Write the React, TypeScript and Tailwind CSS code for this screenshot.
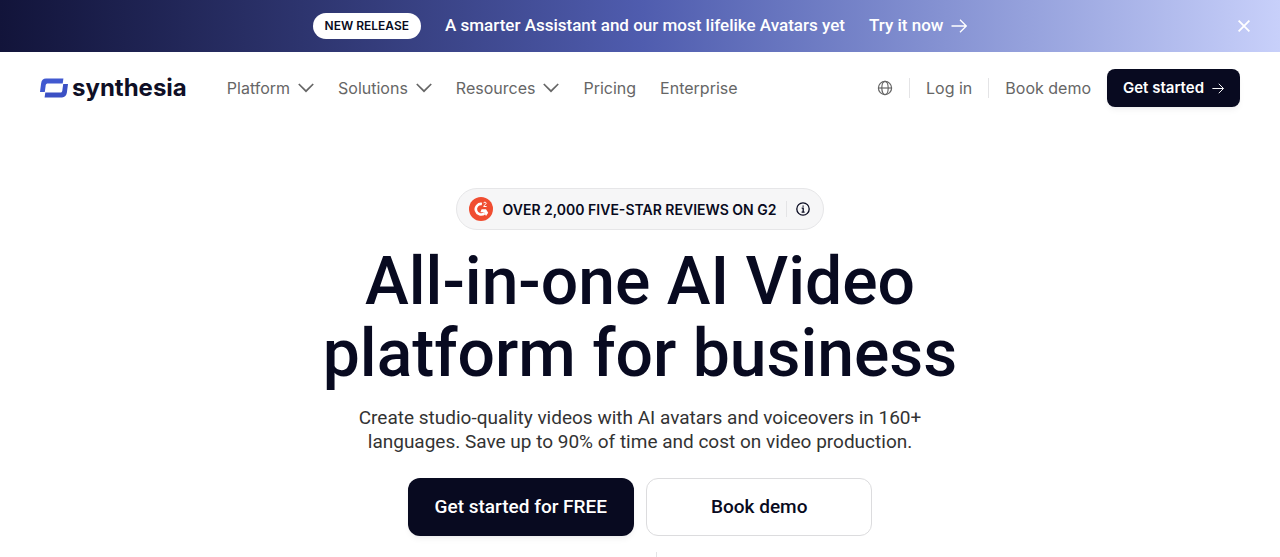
const navItems = [
  { label: 'Platform', menu: true },
  { label: 'Solutions', menu: true },
  { label: 'Resources', menu: true },
  { label: 'Pricing', menu: false },
  { label: 'Enterprise', menu: false },
];

function Arrow({ className }: { className?: string }) {
  return (
    <svg viewBox="0 0 16 14" fill="none" stroke="currentColor" strokeWidth="1.3" className={className} aria-hidden="true">
      <path d="M0.5 7h14.7M9 0.7 15.3 7 9 13.3" />
    </svg>
  );
}

function Chevron() {
  return (
    <svg viewBox="0 0 16 10" fill="none" stroke="currentColor" strokeWidth="1.7" className="h-[10px] w-4" aria-hidden="true">
      <path d="M0.8 1 8 8.2 15.2 1" />
    </svg>
  );
}

function Logo() {
  return (
    <a href="#" aria-label="synthesia" className="flex items-center gap-1 text-[#0f0f26]">
      <svg viewBox="0 0 28 20" className="h-5 w-7" aria-hidden="true">
        <path fill="#4159d0" d="M6 0.5H23.4L22.7 5.5H8C6.6 5.5 5.9 6 5.7 7.3L4.8 14H0L1.1 5.4C1.5 2.3 3.2 0.5 6 0.5Z" />
        <path fill="#3b50c4" d="M22 19.5H4.6L5.3 14.5H20C21.4 14.5 22.1 14 22.3 12.7L23.2 6H28L26.9 14.6C26.5 17.7 24.8 19.5 22 19.5Z" />
      </svg>
      <span className="text-[24px] leading-8 font-bold">synthesia</span>
    </a>
  );
}

function G2Badge() {
  return (
    <svg viewBox="0 0 24 24" className="size-6" aria-hidden="true">
      <circle cx="12" cy="12" r="12" fill="#f04d31" />
      <path d="M12.9 7A5.3 5.3 0 1 0 15.6 16.2" fill="none" stroke="#fff" strokeWidth="2.6" />
      <path d="M12.6 12.2h4.4l2.2 3.5-2.2 3.400-2-3.800h-3.600z" fill="#fff" />
      <path d="M14.5 6.2c.2-1.3 2.7-1.4 2.7.1 0 1.2-2.3 1.5-2.5 3.2h2.9" fill="none" stroke="#fff" />
    </svg>
  );
}

export default function App() {
  return (
    <div className="h-screen overflow-hidden bg-white font-['Inter',sans-serif] text-[#080a20]">
      <div className="flex h-[52px] items-center bg-linear-to-r from-[#12143a] via-[#4f5cae] to-[#c8d0fa] px-7 text-white">
        <div className="flex flex-1 items-center justify-center gap-6 pl-4 font-['Roboto',sans-serif] text-[17px] font-medium">
          <span className="rounded-full bg-white px-3 py-1 font-['Inter',sans-serif] text-[12px] leading-[18px] font-semibold text-[#080a20]">
            NEW RELEASE
          </span>
          <span>A smarter Assistant and our most lifelike Avatars yet</span>
          <a href="#" className="flex items-center gap-2">
            Try it now
            <Arrow className="h-[14px] w-4" />
          </a>
        </div>
        <button type="button" aria-label="Close" className="p-0.5">
          <svg viewBox="0 0 12 12" stroke="currentColor" strokeWidth="1.8" className="size-3" aria-hidden="true">
            <path d="M0.6 0.6 11.4 11.4M11.4 0.6 0.6 11.4" />
          </svg>
        </button>
      </div>

      <header className="flex h-[72px] items-center justify-between px-10 text-[16px] text-[#666666]">
        <div className="flex items-center gap-10">
          <Logo />
          <nav className="flex items-center gap-6">
            {navItems.map((item) =>
              item.menu ? (
                <button key={item.label} type="button" className="flex items-center gap-2">
                  {item.label}
                  <Chevron />
                </button>
              ) : (
                <a key={item.label} href="#">
                  {item.label}
                </a>
              ),
            )}
          </nav>
        </div>
        <div className="flex items-center gap-4">
          <button type="button" aria-label="Language">
            <svg viewBox="0 0 16 16" fill="none" stroke="currentColor" strokeWidth="1.2" className="size-4" aria-hidden="true">
              <circle cx="8" cy="8" r="6.6" />
              <ellipse cx="8" cy="8" rx="3.2" ry="6.6" />
              <path d="M1.4 8h13.2" />
            </svg>
          </button>
          <a href="#" className="border-x border-[#e4e4e6] px-4 leading-5">
            Log in
          </a>
          <a href="#">Book demo</a>
          <a
            href="#"
            className="flex h-[38px] items-center gap-2 rounded-lg bg-[#080a20] px-4 text-[15px] font-semibold text-white shadow-md shadow-[#080a20]/5"
          >
            Get started
            <Arrow className="h-[11px] w-3" />
          </a>
        </div>
      </header>

      <main className="flex flex-col items-center px-6 pt-16 text-center">
        <div className="flex h-[42px] items-center gap-[10px] rounded-full border border-[#e6e6e8] bg-[#f6f6f7] px-3 text-[14px] font-semibold">
          <G2Badge />
          <span>OVER 2,000 FIVE-STAR REVIEWS ON G2</span>
          <button type="button" aria-label="About our reviews" className="border-l border-[#e4e4e6] pl-2">
            <svg viewBox="0 0 16 16" fill="none" stroke="currentColor" strokeWidth="1.3" className="size-4" aria-hidden="true">
              <circle cx="8" cy="8" r="6.2" />
              <path d="M6.7 7.2H8.2V11.3M6.6 11.1h3M7.5 5.1h1.2" />
            </svg>
          </button>
        </div>

        <h1 className="mt-4 font-['Roboto',sans-serif] text-[66px] leading-[72px] font-medium">
          All-in-one AI Video
          <br />
          platform for business
        </h1>

        <p className="mt-4 font-['Roboto',sans-serif] text-[19px] leading-6 text-[#333333]">
          Create studio-quality videos with AI avatars and voiceovers in 160+
          <br />
          languages. Save up to 90% of time and cost on video production.
        </p>

        <div className="mt-6 grid grid-cols-2 gap-3 font-['Roboto',sans-serif] text-[19px] font-medium">
          <a
            href="#"
            className="flex h-[58px] items-center justify-center rounded-xl bg-[#080a20] px-[27px] text-white shadow-md shadow-[#080a20]/5"
          >
            Get started for FREE
          </a>
          <a href="#" className="flex h-[58px] items-center justify-center rounded-xl border border-[#dcdcde] px-[27px]">
            Book demo
          </a>
        </div>

        <div className="mt-4 flex justify-center pl-8">
          <span className="h-5 w-px bg-[#e4e4e6]" />
        </div>
      </main>
    </div>
  );
}
